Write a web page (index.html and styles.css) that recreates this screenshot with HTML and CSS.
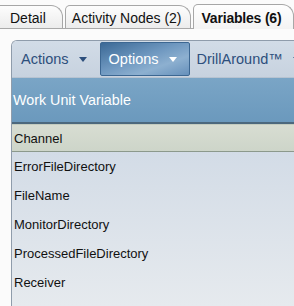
FILE: index.html
```html
<!DOCTYPE html>
<html>
<head>
  <meta charset="utf-8">
  <title>Variables</title>
  <link rel="stylesheet" href="styles.css">
</head>
<body>
  <div class="tabs">
    <div class="tab tab-first">Detail</div>
    <div class="tab tab-second">Activity Nodes (2)</div>
    <div class="tab tab-active">Variables (6)</div>
  </div>

  <div class="panel">
    <div class="toolbar">
      <div class="menu">Actions <span class="arrow"></span></div>
      <div class="menu menu-on">Options <span class="arrow"></span></div>
      <div class="menu">DrillAround&trade; <span class="arrow"></span></div>
    </div>

    <div class="grid-head">Work Unit Variable</div>
    <div class="grid-body">
      <div class="row row-selected">Channel</div>
      <div class="row">ErrorFileDirectory</div>
      <div class="row">FileName</div>
      <div class="row">MonitorDirectory</div>
      <div class="row">ProcessedFileDirectory</div>
      <div class="row">Receiver</div>
    </div>
  </div>
</body>
</html>
```

FILE: styles.css
```css
body {
  margin: 0;
  font-family: 'Liberation Sans', Arial, sans-serif;
  background-color: #fbfbfb;
  overflow: hidden;
}
.tabs {
  display: flex;
  align-items: flex-end;
  height: 28px;
  border-bottom: 1px solid #a9a9a9;
  white-space: nowrap;
}
.tab {
  height: 22px;
  line-height: 24px;
  font-size: 14px;
  color: #111;
  border: 1px solid #a7a7a7;
  border-bottom: none;
  border-radius: 5px 12px 0 0;
  background: linear-gradient(#fdfdfd, #ececec);
}
.tab-first {
  padding: 0 16px 0 10px;
  border-left: none;
  border-radius: 0 12px 0 0;
}
.tab-second {
  margin-left: 2px;
  padding: 0 8px 0 6px;
}
.tab-active {
  margin-left: 2px;
  height: 24px;
  line-height: 26px;
  padding: 0 12px 0 8px;
  font-weight: bold;
  letter-spacing: -0.2px;
  background: linear-gradient(#ffffff, #f3f3f3);
  position: relative;
  top: 1px;
}
.panel {
  margin: 11px 0 0 11px;
  border: 1px solid #8f9cab;
  border-right: none;
  border-bottom: none;
  border-top-left-radius: 6px;
  overflow: hidden;
  white-space: nowrap;
}
.toolbar {
  display: flex;
  align-items: center;
  height: 36px;
  padding-left: 4px;
  background: linear-gradient(#d2dce7, #c7d2df);
  border-bottom: 1px solid #b7c3d1;
}
.menu {
  display: flex;
  align-items: center;
  height: 32px;
  padding: 0 8px 0 5px;
  margin-right: 2px;
  font-size: 14.5px;
  color: #2d4f7c;
}
.arrow {
  display: inline-block;
  margin-left: 10px;
  width: 0;
  height: 0;
  border-left: 4px solid transparent;
  border-right: 4px solid transparent;
  border-top: 5px solid #2d4f7c;
}
.menu-on {
  padding: 0 12px 0 8px;
  margin-left: 3px;
  color: #fff;
  border: 1px solid #3c6792;
  border-radius: 2px;
  background: linear-gradient(160deg, #3b6996 0%, #6f98c0 45%, #8db0d0 70%, #6690bb 100%);
}
.menu-on .arrow {
  border-top-color: #fff;
}
.grid-head {
  height: 44px;
  line-height: 45px;
  padding-left: 1px;
  font-size: 14.3px;
  color: #fff;
  background: linear-gradient(#7aa5c6, #6b99bd);
  border-bottom: 2px solid #4c687d;
}
.grid-body {
  height: 182px;
  background: linear-gradient(#cfd9e5, #e6eaee);
}
.row {
  height: 29px;
  line-height: 30px;
  padding-left: 2px;
  font-size: 13px;
  color: #111;
}
.row-selected {
  height: 26px;
  line-height: 27px;
  background: linear-gradient(#d8ddd2, #cdd5c9);
  border-top: 1px solid #c4ccbf;
  border-bottom: 1px solid #8c998c;
}
```
